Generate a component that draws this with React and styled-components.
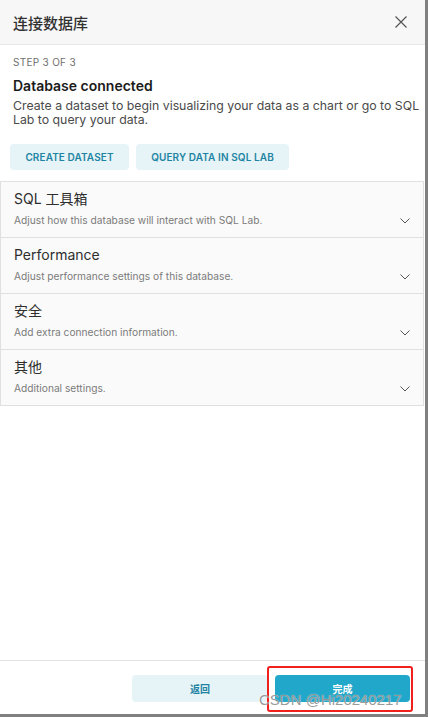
import React from "react";
import styled, { createGlobalStyle } from "styled-components";

const GlobalStyle = createGlobalStyle`
  html, body {
    margin: 0;
    padding: 0;
    background: #808080;
  }
  body {
    font-family: Inter, "Noto Sans CJK SC", sans-serif;
    -webkit-font-smoothing: antialiased;
  }
`;

const Modal = styled.div`
  position: relative;
  width: 425px;
  height: 714px;
  background: #fff;
  display: flex;
  flex-direction: column;
`;

const Header = styled.div`
  height: 44px;
  flex: none;
  display: flex;
  align-items: center;
  justify-content: space-between;
  padding: 0 18px 0 13px;
  background: #f7f7f7;
  border-bottom: 1px solid #e6e6e6;
`;

const Title = styled.h1`
  margin: 0;
  font-size: 15px;
  font-weight: 500;
  color: #323232;
`;

const Close = styled.button`
  border: 0;
  background: none;
  padding: 0;
  display: flex;
  cursor: pointer;
`;

const Body = styled.div`
  flex: 1;
  display: flex;
  flex-direction: column;
`;

const Intro = styled.div`
  padding: 10px 0 11px 13px;
`;

const Step = styled.div`
  font-size: 10px;
  color: #6f6f6f;
  letter-spacing: 0.3px;
  line-height: 14px;
`;

const Heading = styled.h2`
  margin: 7px 0 3px;
  font-size: 14px;
  font-weight: 600;
  color: #1b1b1b;
  line-height: 20px;
`;

const Text = styled.p`
  margin: 0;
  font-size: 12.3px;
  line-height: 14px;
  color: #4a4a4a;
`;

const Actions = styled.div`
  display: flex;
  gap: 7px;
  margin: 17px 0 0 -3px;
`;

const Button = styled.button`
  height: ${p => (p.$tall ? 27 : 26)}px;
  padding: 0;
  width: ${p => p.$w}px;
  border: 0;
  border-radius: 4px;
  background: ${p => (p.$primary ? "#20a7c9" : "#e6f4f8")};
  color: ${p => (p.$primary ? "#fff" : "#1f84a3")};
  font-family: Inter, "Noto Sans CJK SC", sans-serif;
  font-size: 10px;
  font-weight: 600;
  letter-spacing: 0.1px;
  white-space: nowrap;
  cursor: pointer;
`;

const Accordion = styled.div`
  border: 1px solid #e0e0e0;
  margin-right: 1px;
`;

const Panel = styled.div`
  height: 47px;
  padding: 8px 13px 0 13px;
  background: #fafafa;
  border-top: ${p => (p.$first ? "0" : "1px solid #e0e0e0")};
  display: flex;
  align-items: flex-end;
  justify-content: space-between;
`;

const PanelText = styled.div`
  align-self: stretch;
`;

const PanelTitle = styled.div`
  font-size: 14px;
  color: #2e2e2e;
  line-height: 18px;
`;

const PanelDesc = styled.div`
  margin-top: 5px;
  font-size: 10.2px;
  color: #7a7a7a;
  line-height: 14px;
`;

const Chevron = styled.svg`
  margin: 0 0 13px;
  flex: none;
`;

const Footer = styled.div`
  height: 54px;
  flex: none;
  border-top: 1px solid #e3e3e3;
  display: flex;
  justify-content: flex-end;
  align-items: flex-start;
  gap: 7px;
  padding: 14px 15px 0 0;
  box-sizing: border-box;
`;

const Highlight = styled.div`
  position: absolute;
  left: 267px;
  top: 666px;
  width: 146px;
  height: 46px;
  box-sizing: border-box;
  border: 2px solid #f0201c;
  border-radius: 3px;
  pointer-events: none;
`;

const Watermark = styled.div`
  position: absolute;
  left: 259px;
  top: 691px;
  font-family: "Liberation Sans", Arial, sans-serif;
  font-size: 15px;
  line-height: 18px;
  color: rgba(110, 110, 110, 0.7);
  text-shadow: 0 0 1px #fff;
  pointer-events: none;
  white-space: nowrap;
`;

const sections = [
  { title: "SQL 工具箱", desc: "Adjust how this database will interact with SQL Lab." },
  { title: "Performance", desc: "Adjust performance settings of this database." },
  { title: "安全", desc: "Add extra connection information." },
  { title: "其他", desc: "Additional settings." },
];

const App = () => (
  <>
    <GlobalStyle />
    <Modal>
      <Header>
        <Title>连接数据库</Title>
        <Close aria-label="close">
          <svg width="12" height="12" viewBox="0 0 12 12">
            <path d="M0.5 0.5L11.5 11.5M11.5 0.5L0.5 11.5" stroke="#555" strokeWidth="1.2" />
          </svg>
        </Close>
      </Header>
      <Body>
        <Intro>
          <Step>STEP 3 OF 3</Step>
          <Heading>Database connected</Heading>
          <Text>
            Create a dataset to begin visualizing your data as a chart or go to SQL Lab to query your data.
          </Text>
          <Actions>
            <Button $w={119}>CREATE DATASET</Button>
            <Button $w={153}>QUERY DATA IN SQL LAB</Button>
          </Actions>
        </Intro>
        <Accordion>
          {sections.map((s, i) => (
            <Panel key={s.title} $first={i === 0}>
              <PanelText>
                <PanelTitle>{s.title}</PanelTitle>
                <PanelDesc>{s.desc}</PanelDesc>
              </PanelText>
              <Chevron width="10" height="6" viewBox="0 0 10 6">
                <path d="M0.5 0.5L5 5L9.5 0.5" fill="none" stroke="#555" strokeWidth="1" />
              </Chevron>
            </Panel>
          ))}
        </Accordion>
      </Body>
      <Footer>
        <Button $tall $w={136}>返回</Button>
        <Button $tall $primary $w={135}>完成</Button>
      </Footer>
      <Highlight />
      <Watermark>CSDN @Hi20240217</Watermark>
    </Modal>
  </>
);

export default App;
